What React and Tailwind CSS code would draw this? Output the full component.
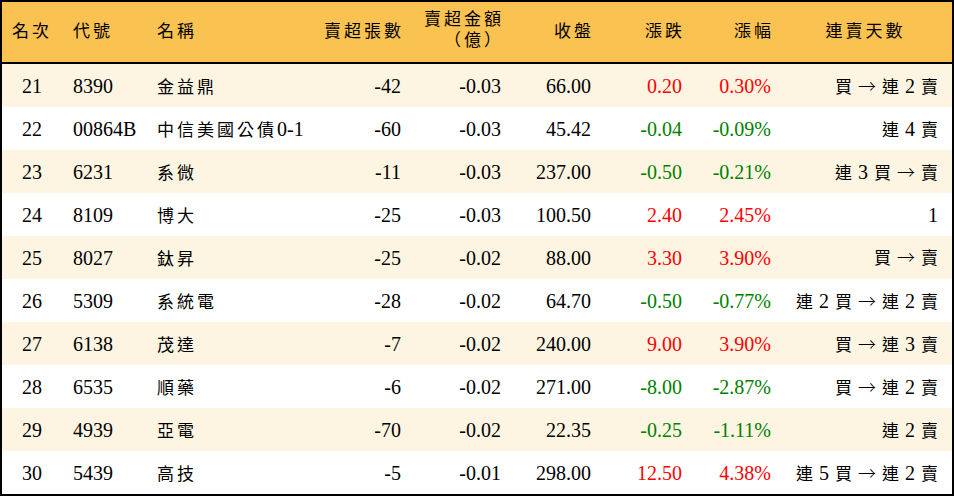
const COLS = 'grid grid-cols-[60px_85px_153px_111px_100px_90px_91px_89px_171px]'

const rows = [
  ['21', '8390', '金益鼎', '-42', '-0.03', '66.00', '0.20', '0.30%', '買→連2賣'],
  ['22', '00864B', '中信美國公債0-1', '-60', '-0.03', '45.42', '-0.04', '-0.09%', '連4賣'],
  ['23', '6231', '系微', '-11', '-0.03', '237.00', '-0.50', '-0.21%', '連3買→賣'],
  ['24', '8109', '博大', '-25', '-0.03', '100.50', '2.40', '2.45%', '1'],
  ['25', '8027', '鈦昇', '-25', '-0.02', '88.00', '3.30', '3.90%', '買→賣'],
  ['26', '5309', '系統電', '-28', '-0.02', '64.70', '-0.50', '-0.77%', '連2買→連2賣'],
  ['27', '6138', '茂達', '-7', '-0.02', '240.00', '9.00', '3.90%', '買→連3賣'],
  ['28', '6535', '順藥', '-6', '-0.02', '271.00', '-8.00', '-2.87%', '買→連2賣'],
  ['29', '4939', '亞電', '-70', '-0.02', '22.35', '-0.25', '-1.11%', '連2賣'],
  ['30', '5439', '高技', '-5', '-0.01', '298.00', '12.50', '4.38%', '連5買→連2賣'],
]

const isCjk = (s) => /[\u3400-\u9fff]/.test(s)

// CJK runs are set smaller and spaced out, latin/digits stay at 20px
function Mixed({ text }) {
  const parts = text.split(/([\u3400-\u9fff]+)/).filter(Boolean)
  return parts.map((p, i) =>
    isCjk(p)
      ? <span key={i} className="text-[17px] tracking-[3px]">{p}</span>
      : <span key={i}>{p}</span>
  )
}

function Streak({ text }) {
  return (
    <div className="flex items-baseline justify-end gap-[6px]">
      {[...text].map((c, i) => (
        <span
          key={i}
          className={isCjk(c) ? 'text-[17px]' : c === '→' ? "font-['Noto_Sans_CJK_TC'] text-[18px] font-light" : ''}
        >{c}</span>
      ))}
    </div>
  )
}

export default function App() {
  return (
    <div className="w-[954px] h-[496px] border-2 border-black bg-white font-['Liberation_Serif','Noto_Sans_CJK_TC',serif] text-[20px] text-black overflow-hidden">
      <div className={`${COLS} h-[62px] bg-[#f9c251] border-b-2 border-black items-center text-[17px] tracking-[3px]`}>
        <div className="text-center">名次</div>
        <div className="pl-[11px]">代號</div>
        <div className="pl-[10px]">名稱</div>
        <div className="text-right pr-[7px]">賣超張數</div>
        <div className="text-right pr-[7px] leading-[21px] pb-[4px]">賣超金額<br />（億）</div>
        <div className="text-right pr-[7px]">收盤</div>
        <div className="text-right pr-[7px]">漲跌</div>
        <div className="text-right pr-[7px]">漲幅</div>
        <div className="text-center pr-[2px]">連賣天數</div>
      </div>
      {rows.map((r, i) => {
        const up = !r[6].startsWith('-')
        const tone = up ? 'text-[#ff0000]' : 'text-[#008000]'
        return (
          <div key={r[0]} className={`${COLS} h-[43px] items-center ${i % 2 === 0 ? 'bg-[#fdf5e2]' : 'bg-white'}`}>
            <div className="text-center">{r[0]}</div>
            <div className="pl-[11px]">{r[1]}</div>
            <div className="pl-[10px] whitespace-nowrap"><Mixed text={r[2]} /></div>
            <div className="text-right pr-[10px]">{r[3]}</div>
            <div className="text-right pr-[10px]">{r[4]}</div>
            <div className="text-right pr-[10px]">{r[5]}</div>
            <div className={`text-right pr-[10px] ${tone}`}>{r[6]}</div>
            <div className={`text-right pr-[10px] ${tone}`}>{r[7]}</div>
            <div className="pr-[14px]"><Streak text={r[8]} /></div>
          </div>
        )
      })}
    </div>
  )
}
